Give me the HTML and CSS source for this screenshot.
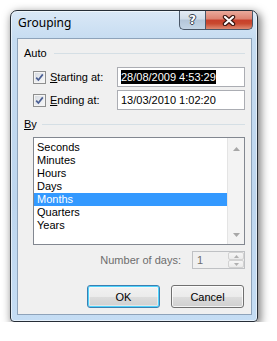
FILE: index.html
```html
<!DOCTYPE html>
<html>
<head>
    <meta charset="utf-8">
    <title>Grouping</title>
    <link rel="stylesheet" href="styles.css">
</head>
<body>
    <div class="window">
        <div class="titlebar">
            <span class="title">Grouping</span>
            <div class="caps">
                <div class="cap help"><span class="qmark">?</span></div>
                <div class="cap close">
                    <svg width="14" height="11" viewBox="0 0 14 11">
                        <path d="M3 2 L11 9 M11 2 L3 9" stroke="#3b1610" stroke-width="4.4" stroke-linecap="round"/>
                        <path d="M3 2 L11 9 M11 2 L3 9" stroke="#fff" stroke-width="2.2" stroke-linecap="round"/>
                    </svg>
                </div>
            </div>
        </div>

        <div class="client">
            <div class="group-head">
                <span>Auto</span><i class="rule"></i>
            </div>

            <div class="field-row">
                <label class="check">
                    <span class="box">
                        <svg width="9" height="9" viewBox="0 0 9 9"><path d="M1.2 4.6 L3.4 7 L7.8 1.4" fill="none" stroke="#4b5f93" stroke-width="1.7"/></svg>
                    </span>
                    <span><u>S</u>tarting at:</span>
                </label>
                <div class="textbox"><span class="sel">28/08/2009 4:53:29</span></div>
            </div>

            <div class="field-row second">
                <label class="check">
                    <span class="box">
                        <svg width="9" height="9" viewBox="0 0 9 9"><path d="M1.2 4.6 L3.4 7 L7.8 1.4" fill="none" stroke="#4b5f93" stroke-width="1.7"/></svg>
                    </span>
                    <span><u>E</u>nding at:</span>
                </label>
                <div class="textbox"><span>13/03/2010 1:02:20</span></div>
            </div>

            <div class="group-head by">
                <span><u>B</u>y</span><i class="rule"></i>
            </div>

            <div class="listbox">
                <ul class="items">
                    <li>Seconds</li>
                    <li>Minutes</li>
                    <li>Hours</li>
                    <li>Days</li>
                    <li class="selected">Months</li>
                    <li>Quarters</li>
                    <li>Years</li>
                </ul>
                <div class="scrollbar">
                    <svg width="7" height="4" viewBox="0 0 7 4"><path d="M0 4 L3.5 0 L7 4 Z" fill="#a7a7a7"/></svg>
                    <svg width="7" height="4" viewBox="0 0 7 4"><path d="M0 0 L3.5 4 L7 0 Z" fill="#a7a7a7"/></svg>
                </div>
            </div>

            <div class="days-row">
                <span class="days-label">Number of days:</span>
                <div class="spin">
                    <span class="spin-val">1</span>
                    <div class="spin-btns">
                        <span class="spin-btn"><svg width="5" height="3" viewBox="0 0 5 3"><path d="M0 3 L2.5 0 L5 3 Z" fill="#b0b0b0"/></svg></span>
                        <span class="spin-btn"><svg width="5" height="3" viewBox="0 0 5 3"><path d="M0 0 L2.5 3 L5 0 Z" fill="#b0b0b0"/></svg></span>
                    </div>
                </div>
            </div>

            <div class="actions">
                <button class="btn default">OK</button>
                <button class="btn">Cancel</button>
            </div>
        </div>
    </div>
</body>
</html>
```

FILE: styles.css
```css
body {
    margin: 0;
    background: #fff;
    font-family: "Liberation Sans", Arial, sans-serif;
    font-size: 11px;
    color: #000;
}
.window {
    box-sizing: border-box;
    width: 248px;
    height: 312px;
    margin: 10px 0 0 10px;
    padding: 0 5px 6px 6px;
    border: 1px solid #262d36;
    border-radius: 7px 7px 4px 4px;
    background: linear-gradient(180deg, #dae8f6 0, #c6dcf1 28px, #bed6ee 60%, #c5ddf4 100%);
    box-shadow: inset 0 0 0 1px rgba(255,255,255,0.55), 2px 3px 9px 1px rgba(0,0,0,0.5);
    display: flex;
    flex-direction: column;
}
.titlebar {
    height: 27px;
    display: flex;
    align-items: flex-start;
}
.title {
    font-family: "Noto Sans", sans-serif;
    font-size: 12px;
    line-height: 16px;
    margin: 4px 0 0 1px;
}
.caps {
    margin-left: auto;
    margin-right: -1px;
    display: flex;
}
.cap {
    box-sizing: border-box;
    height: 19px;
    border: 1px solid #4a5768;
    border-top: none;
    display: flex;
    align-items: center;
    justify-content: center;
}
.help {
    width: 26px;
    border-right: none;
    border-radius: 0 0 0 5px;
    background: linear-gradient(180deg, #e4ecf5 0, #d0dce8 45%, #b4c6d9 50%, #c3d4e5 100%);
}
.qmark {
    font-family: "DejaVu Sans", sans-serif;
    font-weight: bold;
    font-size: 12px;
    line-height: 12px;
    color: #fff;
    text-shadow: 1px 0 #36414f, -1px 0 #36414f, 0 1px #36414f, 0 -1px #36414f;
}
.close {
    width: 48px;
    border-radius: 0 0 5px 0;
    background: linear-gradient(180deg, #eaaa9c 0, #dd8270 45%, #c73f2b 50%, #c9492f 70%, #de8a72 100%);
}
.client {
    box-sizing: border-box;
    width: 235px;
    height: 277px;
    border: 1px solid #8ea3ba;
    background: #f0f0f0;
    padding: 8px 6px 0 6px;
    display: flex;
    flex-direction: column;
}
.group-head {
    height: 13px;
    line-height: 13px;
    display: flex;
    align-items: center;
    gap: 7px;
}
.group-head .rule {
    flex: 1;
    height: 1px;
    background: #d5dfe5;
}
.group-head.by {
    margin-top: 8px;
    gap: 5px;
}
.field-row {
    height: 20px;
    margin-top: 7px;
    padding-left: 9px;
    display: flex;
    align-items: center;
}
.field-row.second {
    margin-top: 3px;
}
.check {
    width: 84px;
    display: flex;
    align-items: center;
    gap: 4px;
}
.box {
    box-sizing: border-box;
    width: 13px;
    height: 13px;
    border: 1px solid #8e8f8f;
    background: linear-gradient(135deg, #d3d8df 0, #eceef1 60%, #f8f8f8 100%);
    box-shadow: inset 0 0 0 1px #f4f4f4;
    display: flex;
    align-items: center;
    justify-content: center;
}
.textbox {
    box-sizing: border-box;
    width: 128px;
    height: 20px;
    border: 1px solid #abadb3;
    background: #fff;
    padding-left: 3px;
    display: flex;
    align-items: center;
    line-height: 14px;
}
.textbox .sel {
    background: #000;
    color: #fff;
}
.listbox {
    box-sizing: border-box;
    width: 212px;
    height: 108px;
    margin: 6px 0 0 9px;
    border: 1px solid #828790;
    background: #fff;
    display: flex;
}
.items {
    flex: 1;
    list-style: none;
    margin: 0;
    padding: 3px 0 0 0;
}
.items li {
    height: 13px;
    line-height: 13px;
    padding-left: 3px;
}
.items li.selected {
    background: #3399ff;
    color: #fff;
}
.scrollbar {
    box-sizing: border-box;
    width: 17px;
    background: #f3f3f3;
    border-left: 1px solid #e4e4e4;
    display: flex;
    flex-direction: column;
    justify-content: space-between;
    align-items: center;
    padding: 9px 0 7px 0;
}
.days-row {
    height: 18px;
    margin-top: 6px;
    display: flex;
    justify-content: flex-end;
    align-items: center;
    gap: 11px;
}
.days-label {
    color: #6d6d6d;
}
.spin {
    box-sizing: border-box;
    width: 53px;
    height: 18px;
    border: 1px solid #bfc1c4;
    background: #f0f0f0;
    display: flex;
}
.spin-val {
    flex: 1;
    padding-left: 4px;
    line-height: 16px;
    color: #6d6d6d;
}
.spin-btns {
    width: 16px;
    display: flex;
    flex-direction: column;
}
.spin-btn {
    box-sizing: border-box;
    flex: 1;
    border: 1px solid #d2d2d2;
    border-radius: 2px;
    background: linear-gradient(180deg, #f6f6f6, #ebebeb);
    display: flex;
    align-items: center;
    justify-content: center;
}
.actions {
    margin-top: 16px;
    padding-right: 1px;
    display: flex;
    justify-content: flex-end;
    gap: 11px;
}
.btn {
    box-sizing: border-box;
    width: 73px;
    height: 23px;
    padding: 0;
    border: 1px solid #707070;
    border-radius: 3px;
    background: linear-gradient(180deg, #f2f2f2 0, #ebebeb 50%, #dddddd 50%, #cfcfcf 100%);
    box-shadow: inset 0 0 0 1px rgba(255,255,255,0.75);
    font-family: "Liberation Sans", Arial, sans-serif;
    font-size: 11px;
    color: #000;
}
.btn.default {
    border-color: #3c7fb1;
    box-shadow: inset 0 0 0 1px #4fd3fc, inset 0 0 0 2px rgba(255,255,255,0.45);
}
```
